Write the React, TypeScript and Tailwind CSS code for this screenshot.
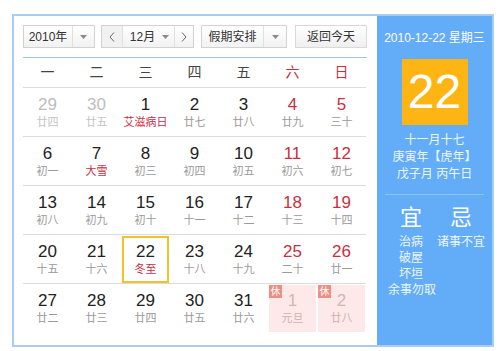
import React from 'react';

interface Day {
  num: number;
  lunar: string;
  muted?: boolean;
  festival?: boolean;
  today?: boolean;
  holiday?: boolean;
}

const weeks: Day[][] = [
  [
    { num: 29, lunar: '廿四', muted: true },
    { num: 30, lunar: '廿五', muted: true },
    { num: 1, lunar: '艾滋病日', festival: true },
    { num: 2, lunar: '廿七' },
    { num: 3, lunar: '廿八' },
    { num: 4, lunar: '廿九' },
    { num: 5, lunar: '三十' },
  ],
  [
    { num: 6, lunar: '初一' },
    { num: 7, lunar: '大雪', festival: true },
    { num: 8, lunar: '初三' },
    { num: 9, lunar: '初四' },
    { num: 10, lunar: '初五' },
    { num: 11, lunar: '初六' },
    { num: 12, lunar: '初七' },
  ],
  [
    { num: 13, lunar: '初八' },
    { num: 14, lunar: '初九' },
    { num: 15, lunar: '初十' },
    { num: 16, lunar: '十一' },
    { num: 17, lunar: '十二' },
    { num: 18, lunar: '十三' },
    { num: 19, lunar: '十四' },
  ],
  [
    { num: 20, lunar: '十五' },
    { num: 21, lunar: '十六' },
    { num: 22, lunar: '冬至', festival: true, today: true },
    { num: 23, lunar: '十八' },
    { num: 24, lunar: '十九' },
    { num: 25, lunar: '二十' },
    { num: 26, lunar: '廿一' },
  ],
  [
    { num: 27, lunar: '廿二' },
    { num: 28, lunar: '廿三' },
    { num: 29, lunar: '廿四' },
    { num: 30, lunar: '廿五' },
    { num: 31, lunar: '廿六' },
    { num: 1, lunar: '元旦', holiday: true },
    { num: 2, lunar: '廿八', holiday: true },
  ],
];

const weekdays = ['一', '二', '三', '四', '五', '六', '日'];

const Caret = () => (
  <svg width="7" height="4" viewBox="0 0 7 4">
    <path d="M0 0h7L3.5 4z" fill="#8a8a8a" />
  </svg>
);

const Chevron = ({ dir }: { dir: 'left' | 'right' }) => (
  <svg width="6" height="10" viewBox="0 0 6 10">
    <path
      d={dir === 'left' ? 'M5 0.5L1 5l4 4.5' : 'M1 0.5L5 5l-4 4.5'}
      fill="none"
      stroke="#666"
      strokeWidth="1"
    />
  </svg>
);

const DayCell = ({ day, col }: { day: Day; col: number }) => {
  const weekend = col >= 5;
  let numColor = 'text-[#222]';
  if (day.muted) numColor = 'text-[#bdbdbd]';
  else if (day.holiday) numColor = 'text-[#d9b3b3]';
  else if (weekend) numColor = 'text-[#c8303f]';

  let lunarColor = 'text-[#9a9a9a]';
  if (day.muted) lunarColor = 'text-[#c4c4c4]';
  else if (day.holiday) lunarColor = 'text-[#d4b0b0]';
  else if (day.festival) lunarColor = 'text-[#c8303f]';

  return (
    <div className="relative h-[48px]">
      {day.holiday && (
        <div className="absolute inset-x-[1px] top-[1px] bottom-0 bg-[#fde9e9]">
          <span className="absolute left-0 top-0 flex h-[13px] w-[13px] items-center justify-center bg-[#f08c82] text-[10px] leading-none text-white">
            休
          </span>
        </div>
      )}
      {day.today && (
        <div className="absolute inset-x-[1px] top-[1px] bottom-0 shadow-[inset_0_0_0_2px_#f4c12c]" />
      )}
      <div className="relative flex flex-col items-center pt-[7px]">
        <span className={`text-[17px] leading-[20px] ${numColor}`}>{day.num}</span>
        <span className={`text-[11px] leading-[14px] ${lunarColor}`}>{day.lunar}</span>
      </div>
    </div>
  );
};

export default function App() {
  return (
    <div
      className="h-[351px] w-[500px] bg-white pl-[12px] pt-[14px]"
      style={{ fontFamily: '"Liberation Sans", "Noto Sans CJK SC", sans-serif' }}
    >
      <div className="flex h-[333px] w-[482px] border-2 border-[#a9cdee]">
        {/* left: calendar */}
        <div className="w-[363px] bg-white pl-[9px] pt-[9px]">
          <div className="flex h-[23px] w-[344px] items-stretch text-[12px] text-[#333]">
            <div className="flex w-[72px] border border-[#d2d2d2] bg-gradient-to-b from-white to-[#f2f2f2]">
              <span className="flex flex-1 items-center justify-center">2010年</span>
              <span className="flex w-[22px] items-center justify-center border-l border-[#e0e0e0]">
                <Caret />
              </span>
            </div>
            <div className="ml-[6px] flex w-[93px] border border-[#d2d2d2] bg-gradient-to-b from-white to-[#f2f2f2]">
              <span className="flex w-[21px] items-center justify-center border-r border-[#e0e0e0] bg-[#f1f1f1]">
                <Chevron dir="left" />
              </span>
              <span className="flex flex-1 items-center justify-center gap-[7px] pl-[2px]">
                12月
                <Caret />
              </span>
              <span className="flex w-[19px] items-center justify-center border-l border-[#e0e0e0]">
                <Chevron dir="right" />
              </span>
            </div>
            <div className="ml-[7px] flex w-[86px] border border-[#d2d2d2] bg-gradient-to-b from-white to-[#f2f2f2]">
              <span className="flex flex-1 items-center justify-center">假期安排</span>
              <span className="flex w-[23px] items-center justify-center border-l border-[#e0e0e0]">
                <Caret />
              </span>
            </div>
            <div className="ml-[8px] flex w-[72px] items-center justify-center border border-[#d9d9d9] bg-gradient-to-b from-white to-[#efefef]">
              返回今天
            </div>
          </div>

          <div className="mt-[9px] h-px w-[344px] bg-[#9fc3e4]" />

          <div className="grid h-[29px] w-[343px] grid-cols-7 text-[14px]">
            {weekdays.map((w, i) => (
              <div
                key={w}
                className={`flex items-center justify-center ${i >= 5 ? 'text-[#c8303f]' : 'text-[#444]'}`}
              >
                {w}
              </div>
            ))}
          </div>

          {weeks.map((week, r) => (
            <div key={r} className="grid w-[343px] grid-cols-7 border-t border-[#dcdcdc]">
              {week.map((d, c) => (
                <DayCell key={c} day={d} col={c} />
              ))}
            </div>
          ))}
        </div>

        {/* right: today detail */}
        <div className="flex-1 bg-[#63acf8] pt-[14px] text-[#eef6ff]">
          <div className="text-center text-[12px] leading-[16px] text-white">2010-12-22 星期三</div>
          <div className="mx-auto mt-[13px] flex h-[66px] w-[66px] items-center justify-center bg-[#fdb514] text-[48px] leading-none text-white">
            22
          </div>
          <div className="mt-[7px] text-center text-[12px] leading-[17px]">
            <div>十一月十七</div>
            <div>庚寅年【虎年】</div>
            <div>戊子月 丙午日</div>
          </div>
          <div className="mx-[8px] mt-[11px] h-px bg-[#8ec4fa]" />
          <div className="mt-[10px] flex pl-[11px]">
            <div className="flex w-[46px] flex-col items-center">
              <span className="text-[22px] leading-[26px] text-white">宜</span>
              <span className="mt-[3px] text-[12px] leading-[16px]">治病</span>
              <span className="text-[12px] leading-[16px]">破屋</span>
              <span className="text-[12px] leading-[16px]">坏垣</span>
            </div>
            <div className="ml-[2px] flex w-[50px] flex-col items-center">
              <span className="text-[22px] leading-[26px] text-white">忌</span>
              <span className="mt-[3px] whitespace-nowrap text-[12px] leading-[16px]">诸事不宜</span>
            </div>
          </div>
          <div className="pl-[11px] text-[12px] leading-[16px]">余事勿取</div>
        </div>
      </div>
    </div>
  );
}
